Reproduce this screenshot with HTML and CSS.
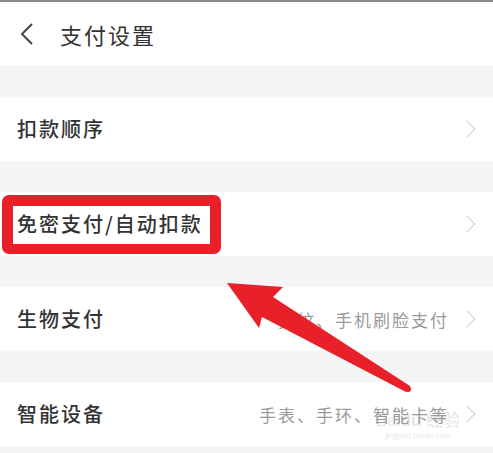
FILE: index.html
```html
<!DOCTYPE html>
<html lang="zh-CN">

<head>
  <meta charset="UTF-8">
  <title>支付设置</title>
  <link rel="stylesheet" href="styles.css">
</head>

<body>

  <div class="header">
    <svg class="back" width="14" height="22" viewBox="0 0 14 22">
      <path d="M12 1 L2 11 L12 21" fill="none" stroke="#444" stroke-width="2" />
    </svg>
    <span class="title">支付设置</span>
  </div>

  <div class="list">
    <div class="row">
      <span class="label">扣款顺序</span>
      <span class="chev"></span>
    </div>

    <div class="row">
      <span class="label mark">免密支付/自动扣款</span>
      <span class="chev"></span>
    </div>

    <div class="row">
      <span class="label">生物支付</span>
      <span class="extra">指纹、手机刷脸支付</span>
      <span class="chev"></span>
    </div>

    <div class="row">
      <span class="label">智能设备</span>
      <span class="extra">手表、手环、智能卡等</span>
      <span class="chev"></span>
    </div>
  </div>

  <!-- annotation arrow -->
  <svg class="arrow" width="493" height="453" viewBox="0 0 493 453">
    <path d="M227 283 L283 287 L273 297 L410 386 L406 392 L262 317 L259 328 Z" fill="#e8202a" />
    <circle cx="408" cy="389" r="3" fill="#e8202a" />
  </svg>

  <div class="watermark">
    <span class="wm-logo">Bai<b>du</b> 经验</span>
    <span class="wm-url">jingyan.baidu.com</span>
  </div>

</body>

</html>
```

FILE: styles.css
```css
body {
  margin: 0;
  background-color: #f5f5f5;
  font-family: "Noto Sans CJK SC", "Noto Sans", sans-serif;
  border-top: 2px solid #8c8c8c;
  position: relative;
  height: 451px;
  overflow: hidden;
}

.header {
  height: 64px;
  background: #fff;
  display: flex;
  align-items: center;
  padding-left: 20px;
}

.back {
  margin-right: 26px;
}

.title {
  font-size: 22px;
  letter-spacing: 2px;
  color: #333;
}

.list {
  display: flex;
  flex-direction: column;
  gap: 31px;
  padding-top: 31px;
}

.row {
  height: 64px;
  background: #fff;
  display: flex;
  align-items: center;
  padding: 0 16px 0 17px;
}

.label {
  font-size: 20px;
  letter-spacing: 2px;
  color: #333;
  flex: 1;
  line-height: 24px;
  font-weight: 500;
}

.extra {
  font-size: 17px;
  letter-spacing: 2px;
  color: #9a9a9a;
  margin-right: 12px;
}

.chev {
  width: 11px;
  height: 11px;
  border-top: 1.5px solid #cfcfcf;
  border-right: 1.5px solid #cfcfcf;
  transform: rotate(45deg);
  margin-right: 4px;
}

.mark {
  position: relative;
  flex: none;
  margin-right: auto;
}

.mark::after {
  content: "";
  position: absolute;
  top: -17px;
  bottom: -18px;
  left: -15px;
  right: -18px;
  border: 11px solid #e8202a;
  border-bottom-width: 10px;
  border-radius: 7px;
}

.arrow {
  position: absolute;
  top: -2px;
  left: 0;
}

.watermark {
  position: absolute;
  left: 376px;
  top: 410px;
  display: flex;
  flex-direction: column;
  align-items: center;
  color: rgba(160, 160, 160, 0.3);
  font-family: "Liberation Sans", sans-serif;
}

.wm-logo {
  font-size: 17px;
  line-height: 18px;
}

.wm-url {
  font-size: 8px;
  line-height: 12px;
}
```
